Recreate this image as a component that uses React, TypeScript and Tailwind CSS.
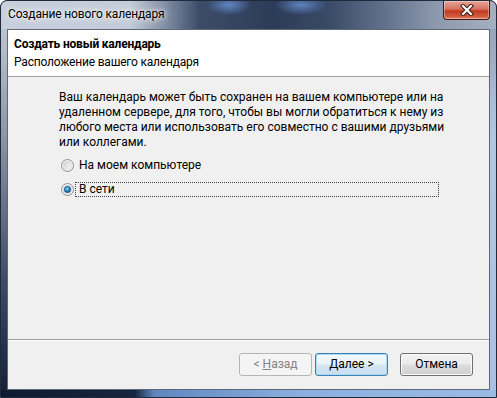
import React from "react"

const font = "font-['Roboto','Noto_Sans',sans-serif]"

function Radio({ checked }: { checked?: boolean }) {
  return (
    <svg width="13" height="13" viewBox="0 0 13 13" className="shrink-0">
      <defs>
        <linearGradient id={checked ? "rb-on" : "rb-off"} x1="0" y1="0" x2="1" y2="1">
          <stop offset="0" stopColor="#cfcfcf" />
          <stop offset="1" stopColor="#fafafa" />
        </linearGradient>
        <radialGradient id="dot" cx="0.45" cy="0.4" r="0.6">
          <stop offset="0" stopColor="#9fe0fb" />
          <stop offset="0.5" stopColor="#2f8ccc" />
          <stop offset="1" stopColor="#14466f" />
        </radialGradient>
      </defs>
      <circle cx="6.5" cy="6.5" r="6" fill="#f4f4f4" stroke="#8f8f8f" strokeWidth="1" />
      <circle cx="6.5" cy="6.5" r="4.3" fill={`url(#${checked ? "rb-on" : "rb-off"})`} stroke="#d4d4d4" strokeWidth="0.6" />
      {checked && <circle cx="6.5" cy="6.5" r="3.2" fill="url(#dot)" stroke="#1f4f78" strokeWidth="0.5" />}
    </svg>
  )
}

function Button({ children, disabled, primary }: { children: React.ReactNode; disabled?: boolean; primary?: boolean }) {
  return (
    <button
      className={
        "h-[23px] w-[73px] rounded-[3px] border text-[12px] leading-[15px] " +
        (disabled
          ? "border-[#b5b5b5] bg-[#f4f4f4] text-[#838383]"
          : primary
            ? "border-[#3c7fb1] bg-[linear-gradient(180deg,#f4f9fc_0%,#e9f2f8_48%,#d5e6f1_52%,#c9def0_100%)] text-black shadow-[inset_0_0_0_1px_#a8dcf6]"
            : "border-[#707070] bg-[linear-gradient(180deg,#f2f2f2_0%,#ebebeb_48%,#dddddd_52%,#cfcfcf_100%)] text-black shadow-[inset_0_0_0_1px_#fcfcfc]")
      }
    >
      {children}
    </button>
  )
}

export default function App() {
  return (
    <div className={`${font} flex h-[398px] w-[497px] flex-col overflow-hidden rounded-t-[7px] border border-[#1f2a3b] bg-[#1f2a3b]`}>
      {/* Title bar */}
      <div className="flex h-[28px] shrink-0 items-start justify-between bg-[radial-gradient(ellipse_22px_10px_at_228px_4px,#5f86c4,transparent),radial-gradient(ellipse_26px_10px_at_300px_4px,#5c83c0,transparent),linear-gradient(90deg,#c6cfdb_0%,#c3ccd8_26%,#8390a6_33%,#3d4d69_40%,#2c3b57_55%,#394a67_66%,#64738d_78%,#8d99ae_88%,#a4afc1_100%)]">
        <span className="pl-[7px] pt-[6px] text-[12px] leading-[15px] tracking-[-0.15px] text-black [text-shadow:0_0_8px_#ffffff,0_0_4px_#ffffff]">
          Создание нового календаря
        </span>
        <div className="mr-[6px] flex h-[19px] w-[47px] items-center justify-center rounded-b-[4px] border border-t-0 border-[#4a1a12] bg-[linear-gradient(180deg,#e7a397_0%,#d7735f_45%,#c2391f_55%,#cf5a3c_85%,#e0866b_100%)] shadow-[inset_0_0_0_1px_rgba(255,255,255,0.35)]">
          <svg width="14" height="12" viewBox="0 0 14 12">
            <path d="M3 2 L11 10 M11 2 L3 10" stroke="#3a1a14" strokeWidth="4.2" strokeLinecap="square" />
            <path d="M3 2 L11 10 M11 2 L3 10" stroke="#ffffff" strokeWidth="2.2" strokeLinecap="square" />
          </svg>
        </div>
      </div>

      {/* Side frames + client */}
      <div className="flex min-h-0 flex-1">
        <div className="w-[6px] bg-[linear-gradient(180deg,#bcc6d2_0%,#8a95a6_30%,#3d4b65_70%,#15223a_100%)]" />
        <div className="flex flex-1 flex-col border border-[#5d6879] bg-[#f0f0f0]">
          {/* Header */}
          <div className="h-[47px] shrink-0 border-b border-[#a0a0a0] bg-white pl-[6px] pt-[7px] text-[12px] leading-[15px] text-black">
            <div className="font-bold tracking-[-0.2px]">Создать новый календарь</div>
            <div className="mt-[3px] tracking-[-0.2px]">Расположение вашего календаря</div>
          </div>

          {/* Body */}
          <div className="flex-1 pl-[51px] pt-[13px] text-[12px] leading-[15px] text-black">
            <p className="whitespace-nowrap">
              Ваш календарь может быть сохранен на вашем компьютере или на
              <br />
              удаленном сервере, для того, чтобы вы могли обратиться к нему из
              <br />
              любого места или использовать его совместно с вашими друзьями
              <br />
              или коллегами.
            </p>
            <div className="mt-[8px] flex flex-col gap-[9px]">
              <div className="flex items-center gap-[1px] pl-[2px]">
                <Radio />
                <span className="h-[15px] w-[364px] border border-transparent pl-[3px] leading-[13px]">На моем компьютере</span>
              </div>
              <div className="flex items-center gap-[1px] pl-[2px]">
                <Radio checked />
                <span className="h-[15px] w-[364px] border border-dotted border-[#404040] pl-[3px] leading-[13px]">В сети</span>
              </div>
            </div>
          </div>

          {/* Footer */}
          <div className="flex h-[50px] shrink-0 items-start justify-end border-t border-[#a0a0a0] pr-[16px] pt-[13px] shadow-[inset_0_1px_0_#ffffff]">
            <Button disabled>
              &lt; <span className="underline">Н</span>азад
            </Button>
            <div className="w-[3px]" />
            <Button primary>
              <span className="underline">Д</span>алее &gt;
            </Button>
            <div className="w-[12px]" />
            <Button>Отмена</Button>
          </div>
        </div>
        <div className="w-[6px] bg-[linear-gradient(180deg,#97a4ba_0%,#b4c7e1_30%,#a8c1e3_100%)]" />
      </div>

      {/* Bottom frame */}
      <div className="h-[7px] shrink-0 bg-[linear-gradient(90deg,#0e1a30_0%,#17263f_27%,#5f86c0_31%,#8aafdf_60%,#9bbbe4_100%)]" />
    </div>
  )
}
